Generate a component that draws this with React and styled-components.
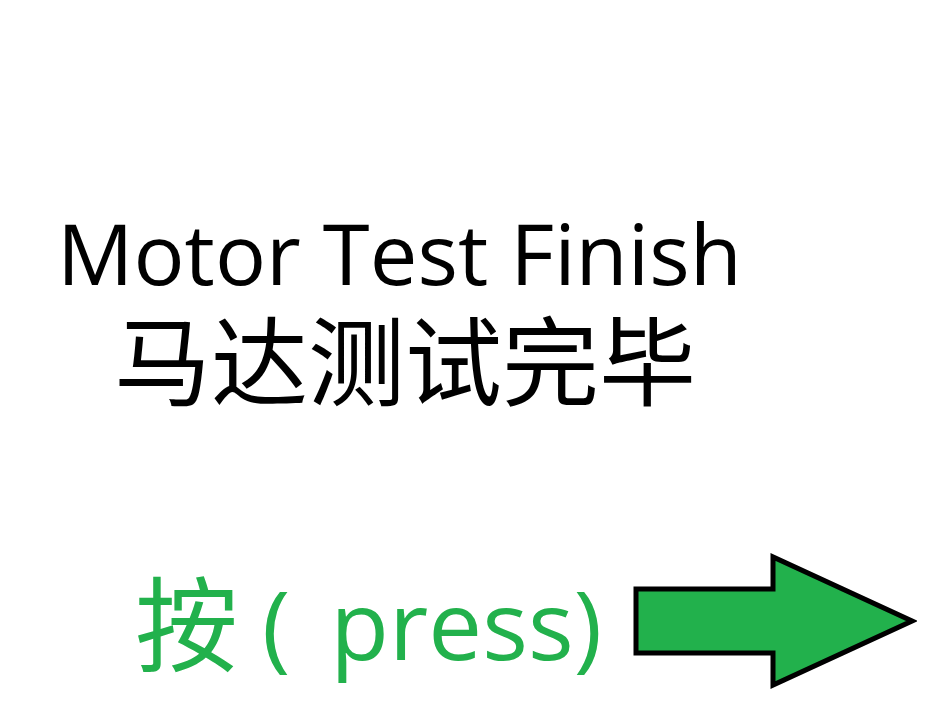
import React from "react";
import styled, { createGlobalStyle } from "styled-components";

const GlobalStyle = createGlobalStyle`
  html, body { margin: 0; padding: 0; background: #ffffff; }
  #root { width: 950px; height: 701px; overflow: hidden; }
`;

const Page = styled.main`
  width: 950px;
  height: 701px;
  box-sizing: border-box;
  background: #ffffff;
  display: flex;
  flex-direction: column;
  padding-top: 202px;
`;

const Title = styled.h1`
  margin: 0 0 0 57px;
  font-family: "Open Sans", "Noto Sans", sans-serif;
  font-weight: 400;
  font-size: 85px;
  line-height: 100px;
  color: #000000;
  white-space: nowrap;
`;

const Subtitle = styled.h2`
  margin: 4px 0 0 114px;
  font-family: "Noto Sans CJK SC", sans-serif;
  font-weight: 400;
  font-size: 97px;
  line-height: 100px;
  color: #000000;
  white-space: nowrap;
`;

const PressRow = styled.div`
  margin: 147px 0 0 135px;
  display: flex;
  align-items: center;
  gap: 31px;
`;

const PressLabel = styled.span`
  font-family: "Open Sans", "Noto Sans CJK SC", sans-serif;
  font-size: 96px;
  line-height: 130px;
  color: #22b14c;
  white-space: nowrap;
`;

const Han = styled.span`
  font-family: "Noto Sans CJK SC", sans-serif;
  font-size: 103px;
  vertical-align: -4px;
`;

const Paren = styled.span`
  margin: 0 40px 0 24px;
`;

const ArrowSvg = styled.svg`
  display: block;
  flex: none;
`;

function Arrow() {
  return (
    <ArrowSvg width="284" height="136" viewBox="0 0 284 136">
      <polygon
        points="3,36 140,36 140,4 279,68 140,132 140,100 3,100"
        fill="#22b14c"
        stroke="#000000"
        strokeWidth="5"
        strokeLinejoin="miter"
      />
    </ArrowSvg>
  );
}

export default function App() {
  return (
    <>
      <GlobalStyle />
      <Page>
        <Title>Motor Test Finish</Title>
        <Subtitle>马达测试完毕</Subtitle>
        <PressRow>
          <PressLabel>
            <Han>按</Han>
            <Paren>(</Paren>
            press)
          </PressLabel>
          <Arrow />
        </PressRow>
      </Page>
    </>
  );
}
